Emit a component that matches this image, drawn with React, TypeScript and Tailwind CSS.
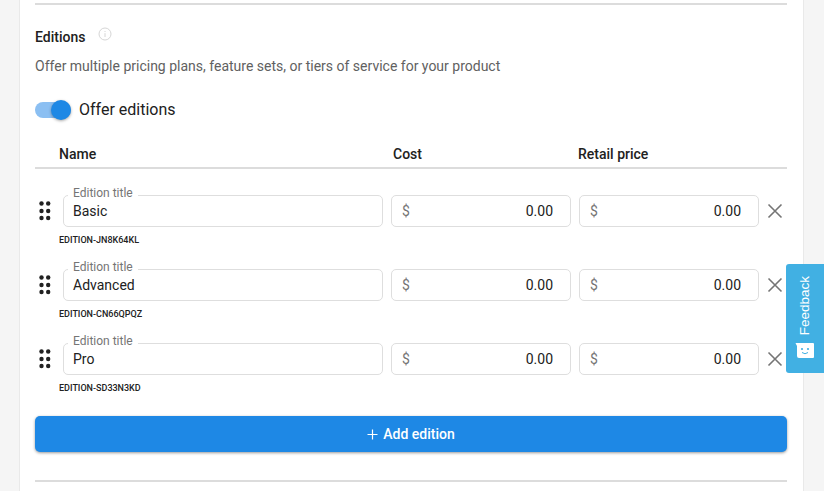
import React from "react";

const font = { fontFamily: "Roboto, 'Liberation Sans', sans-serif" };

function Money() {
  return (
    <div className="w-[180px] h-[32px] border border-[#dedede] rounded-[5px] flex items-center justify-between pl-[10px] pr-[17px] text-[14px] bg-white">
      <span className="text-[#757575]">$</span>
      <span className="text-[#212121]">0.00</span>
    </div>
  );
}

function Grip() {
  return (
    <svg width="14" height="20" viewBox="0 0 14 20" className="shrink-0 fill-[#212121]">
      <circle cx="3.5" cy="2.5" r="2.2" />
      <circle cx="10.2" cy="2.5" r="2.2" />
      <circle cx="3.5" cy="10" r="2.2" />
      <circle cx="10.2" cy="10" r="2.2" />
      <circle cx="3.5" cy="17" r="2.2" />
      <circle cx="10.2" cy="17" r="2.2" />
    </svg>
  );
}

function Row({ title, sku }: { title: string; sku: string }) {
  return (
    <div>
      <div className="flex items-center">
        <div className="w-[28px] flex pl-[3px]">
          <Grip />
        </div>
        <div className="relative w-[320px] h-[32px] border border-[#dedede] rounded-[5px] flex items-center pl-[9px] text-[14px] text-[#212121]">
          {title}
          <span className="absolute left-[4px] top-[-11px] bg-white px-[5px] text-[12px] leading-[16px] text-[#757575]">
            Edition title
          </span>
        </div>
        <div className="ml-[8px]"><Money /></div>
        <div className="ml-[8px]"><Money /></div>
        <svg width="16" height="16" viewBox="0 0 16 16" className="ml-[8px] stroke-[#757575]" strokeWidth="1.6" fill="none">
          <path d="M1.5 1.5 14.5 14.5M14.5 1.5 1.5 14.5" />
        </svg>
      </div>
      <div className="mt-[7px] ml-[24px] text-[9px] leading-[12px] font-medium text-[#212121]">{sku}</div>
    </div>
  );
}

export default function App() {
  return (
    <div className="relative w-[824px] h-[491px] overflow-hidden bg-[#f5f5f5]" style={font}>
      <div className="ml-[19px] w-[785px] h-[491px] bg-white border-x border-[#e9e9e9] px-[15px]">
        <div className="w-[752px]">
          <div className="h-[5px] border-b-2 border-[#dcdcdc]" />
          <div className="mt-[23px] flex items-start h-[18px]">
            <span className="text-[14px] leading-[18px] font-medium text-[#212121]">Editions</span>
            <svg width="14" height="14" viewBox="0 0 14 14" className="ml-[13px] mt-[-1px] fill-none stroke-[#d6d6d6]">
              <circle cx="7" cy="7" r="6" />
              <path d="M7 6.2V10M7 4V5" />
            </svg>
          </div>
          <div className="mt-[10px] text-[14px] leading-[20px] text-[#616161]">
            Offer multiple pricing plans, feature sets, or tiers of service for your product
          </div>
          <div className="mt-[22px] flex items-center h-[24px]">
            <div className="relative w-[36px] h-[16px] rounded-full bg-[#8bbff2]">
              <div className="absolute right-0 top-[-2px] w-[20px] h-[20px] rounded-full bg-[#1e88e5] shadow-[0_1px_3px_rgba(0,0,0,0.35)]" />
            </div>
            <span className="ml-[8px] text-[16px] text-[#212121]">Offer editions</span>
          </div>
          <div className="mt-[22px] h-[25px] border-b-2 border-[#dcdcdc] flex text-[14px] leading-[20px] font-medium text-[#212121]">
            <span className="ml-[24px] w-[334px]">Name</span>
            <span className="w-[185px]">Cost</span>
            <span>Retail price</span>
          </div>
          <div className="mt-[26px] flex flex-col gap-[23px]">
            <Row title="Basic" sku="EDITION-JN8K64KL" />
            <Row title="Advanced" sku="EDITION-CN66QPQZ" />
            <Row title="Pro" sku="EDITION-SD33N3KD" />
          </div>
          <button className="mt-[22px] w-full h-[36px] rounded-[5px] bg-[#1e88e5] text-white text-[14px] font-medium flex items-center justify-center gap-[5px] shadow-[0_1px_3px_rgba(0,0,0,0.4)]">
            <svg width="11" height="11" viewBox="0 0 11 11" className="stroke-white" strokeWidth="1.2">
              <path d="M5.5 0.5V10.5M0.5 5.5H10.5" />
            </svg>
            Add edition
          </button>
          <div className="mt-[28px] h-[2px] bg-[#dcdcdc]" />
        </div>
      </div>
      <div className="absolute left-[786px] top-[264px] w-[38px] h-[109px] bg-[#41b0e3] rounded-l-[3px] flex flex-col items-center">
        <span className="mt-[12px] text-[13.5px] leading-[16px] text-white [writing-mode:vertical-rl] rotate-180" style={{ fontFamily: "'Liberation Sans', sans-serif" }}>
          Feedback
        </span>
        <svg width="20" height="16" viewBox="0 0 20 16" className="mt-[8px]">
          <path d="M0.5 0H18a1 1 0 0 1 1 1V14a1 1 0 0 1-1 1H4a2 2 0 0 1-2-2V3Z" fill="white" />
          <circle cx="7" cy="6" r="1.1" fill="#41b0e3" />
          <circle cx="13" cy="6" r="1.1" fill="#41b0e3" />
          <path d="M7 9.5Q10 12 13 9.5" stroke="#41b0e3" fill="none" strokeWidth="1" />
        </svg>
      </div>
    </div>
  );
}
